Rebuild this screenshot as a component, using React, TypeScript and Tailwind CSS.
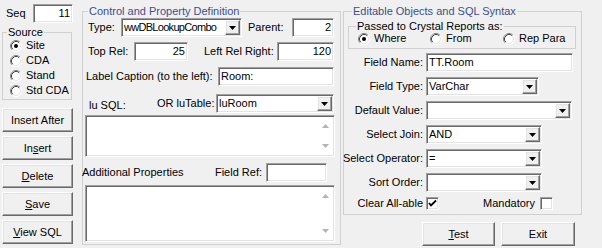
import React from "react";

const sunken =
  "border border-t-[#a0a0a0] border-l-[#a0a0a0] border-b-white border-r-white shadow-[inset_1px_1px_0_#696969,inset_-1px_-1px_0_#e3e3e3] bg-white";
const raised =
  "border border-t-white border-l-white border-b-[#696969] border-r-[#696969] shadow-[inset_-1px_-1px_0_#a0a0a0,inset_1px_1px_0_#e3e3e3] bg-[#f0f0f0]";

function Input({ w, value = "", right = false, className = "" }: { w: string; value?: string; right?: boolean; className?: string }) {
  return (
    <div className={`${sunken} ${w} h-[19px] shrink-0 flex items-center px-[2px] ${right ? "justify-end" : "justify-start"} ${className}`}>
      <span className="whitespace-nowrap">{value}</span>
    </div>
  );
}

function DropBtn() {
  return (
    <div className={`${raised} w-[15px] h-full shrink-0 flex items-center justify-center`}>
      <svg width="7" height="4" viewBox="0 0 7 4">
        <polygon points="0,0 7,0 3.5,4" fill="#000" />
      </svg>
    </div>
  );
}

function Combo({ w, value = "", className = "", textClass = "" }: { w: string; value?: string; className?: string; textClass?: string }) {
  return (
    <div className={`${sunken} ${w} h-[19px] shrink-0 flex items-center p-[1px] ${className}`}>
      <span className={`flex-1 pl-[1px] whitespace-nowrap overflow-hidden ${textClass}`}>{value}</span>
      <DropBtn />
    </div>
  );
}

function Radio({ checked = false, label }: { checked?: boolean; label: string }) {
  return (
    <div className="flex items-center">
      <svg width="12" height="12" viewBox="0 0 12 12" className="shrink-0">
        <circle cx="6" cy="6" r="5.5" fill="#fff" />
        <path d="M9.89 2.11 A5.5 5.5 0 0 0 2.11 9.89" fill="none" stroke="#808080" strokeWidth="1" />
        <path d="M2.11 9.89 A5.5 5.5 0 0 0 9.89 2.11" fill="none" stroke="#ffffff" strokeWidth="1" />
        <path d="M9.18 2.82 A4.5 4.5 0 0 0 2.82 9.18" fill="none" stroke="#404040" strokeWidth="1" />
        <path d="M2.82 9.18 A4.5 4.5 0 0 0 9.18 2.82" fill="none" stroke="#e3e3e3" strokeWidth="1" />
        {checked && <circle cx="6" cy="6" r="2" fill="#000" />}
      </svg>
      <span className="ml-[4px] whitespace-nowrap">{label}</span>
    </div>
  );
}

function Check({ checked = false, className = "" }: { checked?: boolean; className?: string }) {
  return (
    <div className={`${sunken} w-[13px] h-[13px] shrink-0 flex items-center justify-center ${className}`}>
      {checked && (
        <svg width="9" height="9" viewBox="0 0 9 9">
          <path d="M1 4 L3 6.5 L8 1.5" fill="none" stroke="#000" strokeWidth="1.8" />
        </svg>
      )}
    </div>
  );
}

function Memo({ h }: { h: string }) {
  return (
    <div className={`${sunken} w-[250px] ${h} -ml-[1px] flex justify-end p-[1px]`}>
      <div className="w-[16px] h-full flex flex-col justify-between items-center py-[1px]">
        <div className="h-[16px] flex items-center justify-center">
          <svg width="7" height="4" viewBox="0 0 7 4">
            <polygon points="0,4 3.5,0 7,4" fill="#b4b4b4" />
          </svg>
        </div>
        <div className="h-[16px] flex items-center justify-center">
          <svg width="7" height="4" viewBox="0 0 7 4">
            <polygon points="0,0 7,0 3.5,4" fill="#b4b4b4" />
          </svg>
        </div>
      </div>
    </div>
  );
}

function Btn({ w, children, className = "" }: { w: string; children: React.ReactNode; className?: string }) {
  return (
    <div className={`${raised} ${w} h-[24px] shrink-0 flex items-center justify-center whitespace-nowrap ${className}`}>
      {children}
    </div>
  );
}

function Row({ label, children, first = false }: { label: string; children: React.ReactNode; first?: boolean }) {
  return (
    <div className={`flex items-center h-[19px] ${first ? "mt-[4px]" : "mt-[5px]"}`}>
      <div className="w-[75px] shrink-0 flex justify-end whitespace-nowrap">{label}</div>
      <div className="ml-[3px] flex">{children}</div>
    </div>
  );
}

export default function App() {
  return (
    <div className="w-[602px] h-[248px] overflow-hidden bg-[#f0f0f0] text-black text-[11px] leading-[13px] font-['Liberation_Sans',Arial,sans-serif] flex items-start">
      {/* Left column */}
      <div className="w-[72px] ml-[2px] pt-[4px] flex flex-col shrink-0">
        <div className="flex items-center h-[19px]">
          <span className="pl-[4px]">Seq</span>
          <Input w="w-[40px]" value="11" right className="ml-auto mr-[1px]" />
        </div>
        <fieldset className="mt-[3px] w-[70px] min-w-0 border border-[#d0d0d0] pl-[3px] pb-[1px]">
          <legend className="ml-[1px] px-[1px] leading-[12px]">Source</legend>
          <div className="pl-[4px]">
            <div className="h-[15px] flex items-center"><Radio checked label="Site" /></div>
            <div className="h-[15px] flex items-center"><Radio label="CDA" /></div>
            <div className="h-[15px] flex items-center"><Radio label="Stand" /></div>
            <div className="h-[15px] flex items-center"><Radio label="Std CDA" /></div>
          </div>
        </fieldset>
        <div className="mt-[8px] flex flex-col gap-[4px]">
          <Btn w="w-[71px]">Insert After</Btn>
          <Btn w="w-[71px]"><span>In<u>s</u>ert</span></Btn>
          <Btn w="w-[71px]"><span><u>D</u>elete</span></Btn>
          <Btn w="w-[71px]"><span><u>S</u>ave</span></Btn>
          <Btn w="w-[71px]"><span><u>V</u>iew SQL</span></Btn>
        </div>
      </div>

      {/* Middle group */}
      <fieldset className="ml-[8px] mt-[5px] w-[259px] min-w-0 shrink-0 border border-[#d0d0d0] pl-[3px] pr-[6px] pb-[2px]">
        <legend className="ml-[2px] px-[1px] text-[#3c4f8c]">Control and Property Definition</legend>
        <div className="flex items-center h-[19px]">
          <span className="w-[35px] pl-[2px] shrink-0">Type:</span>
          <Combo w="w-[121px]" value="wwDBLookupCombo" textClass="tracking-[-0.7px]" />
          <span className="pl-[6px]">Parent:</span>
          <Input w="w-[42px]" value="2" right className="ml-auto" />
        </div>
        <div className="flex items-center h-[19px] mt-[5px]">
          <span className="w-[48px] pl-[2px] shrink-0">Top Rel:</span>
          <Input w="w-[54px]" value="25" right />
          <span className="ml-[16px] whitespace-nowrap">Left Rel Right:</span>
          <Input w="w-[57px]" value="120" right className="ml-auto" />
        </div>
        <div className="flex items-center h-[19px] mt-[6px]">
          <span className="whitespace-nowrap">Label Caption (to the left):</span>
          <Input w="w-[116px]" value="Room:" className="ml-auto" />
        </div>
        <div className="flex items-center h-[19px] mt-[8px]">
          <span className="w-[71px] pl-[3px] mt-[3px] shrink-0 whitespace-nowrap">lu SQL:</span>
          <span className="whitespace-nowrap">OR luTable:</span>
          <Combo w="w-[118px]" value="luRoom" className="ml-auto" />
        </div>
        <div className="mt-[2px]">
          <Memo h="h-[42px]" />
        </div>
        <div className="flex items-center h-[19px] mt-[6px]">
          <span className="-ml-[4px] whitespace-nowrap">Additional Properties</span>
          <span className="ml-auto whitespace-nowrap">Field Ref:</span>
          <Input w="w-[61px]" className="ml-[4px] mr-[7px]" />
        </div>
        <div className="mt-[3px]">
          <Memo h="h-[57px]" />
        </div>
      </fieldset>

      {/* Right column */}
      <div className="ml-[2px] mt-[5px] w-[239px] shrink-0 flex flex-col">
        <fieldset className="min-w-0 border border-[#d0d0d0] pl-[4px] pr-[5px] pb-[4px]">
          <legend className="ml-[4px] px-[1px] text-[#3c4f8c]">Editable Objects and SQL Syntax</legend>
          <fieldset className="mt-[2px] min-w-0 border border-[#d0d0d0] pl-[3px] pb-[3px]">
            <legend className="ml-[4px] px-[1px] leading-[12px]">Passed to Crystal Reports as:</legend>
            <div className="h-[13px] flex items-center pl-[6px]">
              <div className="w-[72px] shrink-0"><Radio checked label="Where" /></div>
              <div className="w-[73px] shrink-0"><Radio label="From" /></div>
              <div><Radio label="Rep Para" /></div>
            </div>
          </fieldset>
          <Row label="Field Name:" first>
            <Input w="w-[147px]" value="TT.Room" />
          </Row>
          <Row label="Field Type:">
            <Combo w="w-[113px]" value="VarChar" />
          </Row>
          <Row label="Default Value:">
            <Combo w="w-[146px]" />
          </Row>
          <Row label="Select Join:">
            <Combo w="w-[116px]" value="AND" />
          </Row>
          <Row label="Select Operator:">
            <Combo w="w-[116px]" value="=" />
          </Row>
          <Row label="Sort Order:">
            <Combo w="w-[116px]" />
          </Row>
          <div className="flex items-center h-[13px] mt-[5px]">
            <div className="w-[75px] shrink-0 flex justify-end whitespace-nowrap">Clear All-able</div>
            <Check checked className="ml-[3px]" />
            <span className="ml-[44px] whitespace-nowrap">Mandatory</span>
            <Check className="ml-[5px]" />
          </div>
        </fieldset>
        <div className="mt-[7px] flex">
          <Btn w="w-[73px]" className="ml-[79px]"><span><u>T</u>est</span></Btn>
          <Btn w="w-[74px]" className="ml-[6px]">Exit</Btn>
        </div>
      </div>
    </div>
  );
}
